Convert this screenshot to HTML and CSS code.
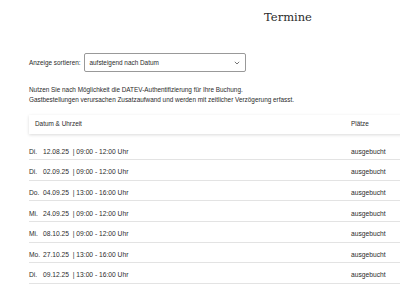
FILE: index.html
```html
<!DOCTYPE html>
<html lang="de">
<head>
  <meta charset="UTF-8">
  <meta name="viewport" content="width=device-width, initial-scale=1.0">
  <title>Termine</title>
  <link rel="stylesheet" href="styles.css">
</head>
<body>
  <main class="page">
    <h1 class="title">Termine</h1>

    <!-- Sortierung -->
    <div class="sort">
      <label for="sort" class="sort-label">Anzeige sortieren:</label>
      <div class="select">
        <span>aufsteigend nach Datum</span>
        <svg class="chevron" width="6" height="4" viewBox="0 0 6 4"><path d="M0.8 0.8 L3 3 L5.2 0.8" fill="none" stroke="#666" stroke-width="0.9"/></svg>
      </div>
    </div>

    <p class="hint">
      Nutzen Sie nach Möglichkeit die DATEV-Authentifizierung für Ihre Buchung.<br>
      Gastbestellungen verursachen Zusatzaufwand und werden mit zeitlicher Verzögerung erfasst.
    </p>

    <!-- Termine -->
    <div class="table">
      <div class="head">
        <span>Datum &amp; Uhrzeit</span>
        <span>Plätze</span>
      </div>
      <div class="row"><span><span class="day">Di.</span>12.08.25 &nbsp;| 09:00 - 12:00 Uhr</span><span>ausgebucht</span></div>
      <div class="row"><span><span class="day">Di.</span>02.09.25 &nbsp;| 09:00 - 12:00 Uhr</span><span>ausgebucht</span></div>
      <div class="row"><span><span class="day">Do.</span>04.09.25 &nbsp;| 13:00 - 16:00 Uhr</span><span>ausgebucht</span></div>
      <div class="row"><span><span class="day">Mi.</span>24.09.25 &nbsp;| 09:00 - 12:00 Uhr</span><span>ausgebucht</span></div>
      <div class="row"><span><span class="day">Mi.</span>08.10.25 &nbsp;| 09:00 - 12:00 Uhr</span><span>ausgebucht</span></div>
      <div class="row"><span><span class="day">Mo.</span>27.10.25 &nbsp;| 13:00 - 16:00 Uhr</span><span>ausgebucht</span></div>
      <div class="row"><span><span class="day">Di.</span>09.12.25 &nbsp;| 13:00 - 16:00 Uhr</span><span>ausgebucht</span></div>
    </div>
  </main>
</body>
</html>
```

FILE: styles.css
```css
html, body { margin: 0; overflow: hidden; background: #fff; }
body { font-family: "Liberation Sans", Arial, sans-serif; font-size: 6.4px; color: #2b2b2b; }
.page { width: 518px; padding: 0 29px; }
.title { margin: 0; padding-top: 10px; text-align: center; font-family: "DejaVu Serif", serif; font-weight: normal; font-size: 11.5px; line-height: 14px; color: #2b2b2b; }
.sort { display: flex; align-items: center; gap: 3px; margin-top: 29px; }
.select { display: flex; align-items: center; justify-content: space-between; box-sizing: border-box; width: 162px; height: 19px; padding: 0 5px; border: 1px solid #999; border-radius: 2px; }
.hint { margin: 13px 0 0; line-height: 9.5px; }
.table { margin-top: 11px; }
.head { display: grid; grid-template-columns: 316px 1fr; padding: 5px 6px; line-height: 8.6px; background: #fff; box-shadow: 0 1px 3px rgba(0, 0, 0, 0.15); margin-bottom: 6px; }
.row { display: grid; grid-template-columns: 322px 1fr; padding: 8.3px 0 3.3px; font-size: 6.7px; line-height: 8px; border-bottom: 1px solid #e3e3e3; }
.day { display: inline-block; width: 14px; }
```
